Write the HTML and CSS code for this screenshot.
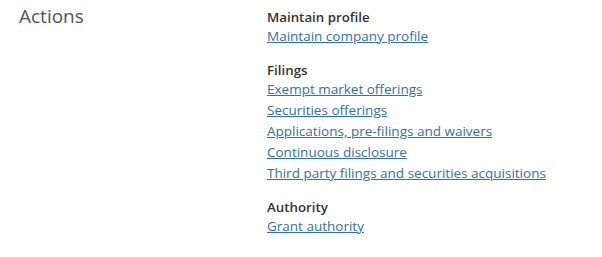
FILE: index.html
```html
<!DOCTYPE html>
<html lang="en">
<head>
  <meta charset="UTF-8">
  <title>Actions</title>
  <link rel="stylesheet" href="styles.css">
</head>
<body>
  <div class="actions">
    <h2 class="actions-title">Actions</h2>
    <div class="actions-list">
      <div class="group">
        <h3>Maintain profile</h3>
        <a href="#">Maintain company profile</a>
      </div>
      <div class="group">
        <h3>Filings</h3>
        <a href="#">Exempt market offerings</a>
        <a href="#">Securities offerings</a>
        <a href="#">Applications, pre-filings and waivers</a>
        <a href="#">Continuous disclosure</a>
        <a href="#">Third party filings and securities acquisitions</a>
      </div>
      <div class="group">
        <h3>Authority</h3>
        <a href="#">Grant authority</a>
      </div>
    </div>
  </div>
</body>
</html>
```
FILE: styles.css
```css
* {
  margin: 0;
  padding: 0;
  box-sizing: border-box;
}

body {
  font-family: 'Open Sans', sans-serif;
  font-size: 13.5px;
  line-height: 21px;
  color: #333;
  background-color: #fff;
}

.actions {
  display: flex;
  padding: 7px 0 0 19px;
}

.actions-title {
  width: 248px;
  font-size: 19px;
  font-weight: normal;
  line-height: 26px;
  color: #555;
  margin-top: -4px;
}

.actions-list {
  display: flex;
  flex-direction: column;
  gap: 13px;
}

.group {
  display: flex;
  flex-direction: column;
  align-items: flex-start;
}

.group h3 {
  font-size: 13.3px;
  font-weight: 600;
  color: #333;
  margin-bottom: -2px;
}

.group a {
  color: #2f6fba;
  text-decoration: underline;
}
```
